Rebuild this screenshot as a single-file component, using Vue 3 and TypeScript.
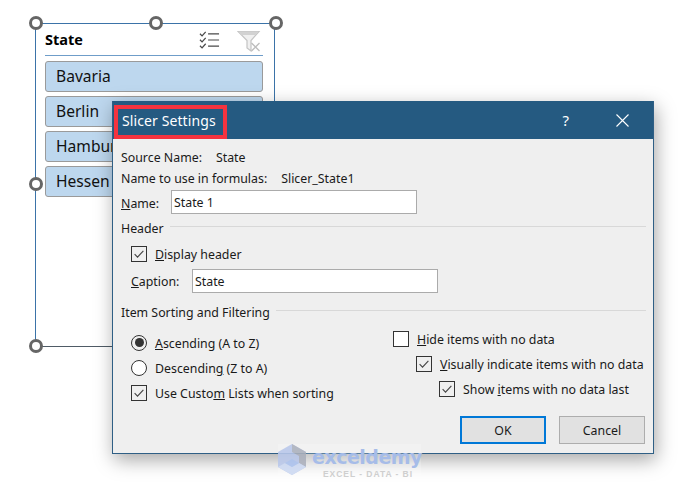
<script setup lang="ts">
const states: string[] = ['Bavaria', 'Berlin', 'Hamburg', 'Hessen']
</script>

<template>
  <div class="stage">
    <section class="slicer">
      <header class="slicer-head">
        <strong>State</strong>
        <svg class="ico-multi" width="21" height="20" viewBox="0 0 22 20" fill="none" stroke="#4a4a4a" stroke-width="1.3">
          <path d="M1 3.5l2.2 2.2L7 1.4M1 9.8L3.2 12 7 7.7M1 16l2.2 2.2L7 13.9" />
          <path d="M9.500 3.500H21M9.500 10H21M9.500 16.500H21" />
        </svg>
        <svg class="ico-filter" width="24" height="22" viewBox="0 0 24 22" fill="none">
          <path d="M1 1.500H22L14 10.500V21L10 18V10.500Z" fill="#f0f0f0" stroke="#c4c4c4" stroke-width="1.200" />
          <path d="M1.500 1.500H21.500L18.500 5H4.500Z" fill="#d2d2d2" />
          <path d="M14.500 13l8 8M22.500 13l-8 8" stroke="#bdbdbd" stroke-width="1.300" />
        </svg>
      </header>
      <ul class="items">
        <li v-for="s in states" :key="s">{{ s }}</li>
      </ul>
      <i class="handle h-tl"></i><i class="handle h-tc"></i><i class="handle h-tr"></i>
      <i class="handle h-ml"></i><i class="handle h-bl"></i>
    </section>

    <section class="dialog">
      <header class="titlebar">
        <span class="title">Slicer Settings</span>
        <span class="help">?</span>
        <svg class="close" width="13" height="13" viewBox="0 0 13 13" stroke="#fff" stroke-width="1.100"><path d="M.5.500l12 12M12.500.500l-12 12" /></svg>
      </header>
      <div class="body">
        <div class="row r-source"><span>Source Name:</span><span class="val1">State</span></div>
        <div class="row r-formula"><span>Name to use in formulas:</span><span class="val2">Slicer_State1</span></div>
        <div class="row r-name">
          <label class="lab-name"><u>N</u>ame:</label>
          <div class="input in-name">State 1</div>
        </div>
        <div class="group g-header"><span>Header</span><hr /></div>
        <div class="row r-display">
          <span class="check on"><svg viewBox="0 0 16 16"><path d="M3 8.200l3.300 3.300L13 4.500" /></svg></span>
          <span class="lab"><u>D</u>isplay header</span>
        </div>
        <div class="row r-caption">
          <label class="lab-caption"><u>C</u>aption:</label>
          <div class="input in-caption">State</div>
        </div>
        <div class="group g-sort"><span>Item Sorting and Filtering</span><hr /></div>
        <div class="columns">
          <div class="col-left">
            <div class="row opt"><span class="radio on"></span><span class="lab"><u>A</u>scending (A to Z)</span></div>
            <div class="row opt"><span class="radio"></span><span class="lab">Descendin<u>g</u> (Z to A)</span></div>
            <div class="row opt"><span class="check on"><svg viewBox="0 0 16 16"><path d="M3 8.200l3.300 3.300L13 4.500" /></svg></span><span class="lab">Use Custo<u>m</u> Lists when sorting</span></div>
          </div>
          <div class="col-right">
            <div class="row opt"><span class="check"></span><span class="lab"><u>H</u>ide items with no data</span></div>
            <div class="row opt indent1"><span class="check on"><svg viewBox="0 0 16 16"><path d="M3 8.200l3.300 3.300L13 4.500" /></svg></span><span class="lab"><u>V</u>isually indicate items with no data</span></div>
            <div class="row opt indent2"><span class="check on"><svg viewBox="0 0 16 16"><path d="M3 8.200l3.300 3.300L13 4.500" /></svg></span><span class="lab">Show <u>i</u>tems with no data last</span></div>
          </div>
        </div>
        <footer class="buttons">
          <button class="btn primary">OK</button>
          <button class="btn">Cancel</button>
        </footer>
      </div>
    </section>

    <i class="redbox"></i>

    <div class="watermark">
      <svg width="28" height="31" viewBox="0 0 28 31">
        <path d="M14 0L28 8V23L14 31L0 23V8Z" fill="#b7c6ea" />
        <path d="M14 0L28 8V23L21 19V12L14 8Z" fill="#a9aebb" />
        <path d="M0 23L7 19L14 23L21 19L28 23L14 31Z" fill="#cbd8f2" />
        <path d="M14 15L21 19L14 23L7 19Z" fill="#a8c0ee" />
      </svg>
      <div class="wm-text">
        <span class="wm-name">exceldemy</span>
        <span class="wm-sub">EXCEL - DATA - BI</span>
      </div>
    </div>
  </div>
</template>

<style>
html, body { margin: 0; background: #fff; }
</style>

<style scoped>
.stage {
  position: relative;
  width: 700px;
  height: 491px;
  overflow: hidden;
  background: #fff;
  font-family: "Noto Sans", "Open Sans", sans-serif;
  font-size: 12.35px;
  color: #1a1a1a;
}

/* slicer */
.slicer {
  position: absolute;
  left: 35px;
  top: 23px;
  width: 240px;
  height: 324px;
  box-sizing: border-box;
  border: 1px solid #3b73a8;
  border-bottom-color: #4f5b66;
  padding: 0 9px;
}
.slicer-head {
  display: flex;
  align-items: center;
  height: 31px;
  border-bottom: 1px solid #6f9dc9;
  width: 218px;
  font-family: "Open Sans", sans-serif;
  font-size: 14.5px;
  color: #000;
}
.slicer-head strong { flex: 1; }
.ico-multi { margin-right: 17px; }
.ico-filter { margin-right: 2px; margin-top: 2px; }
.items {
  list-style: none;
  margin: 5px 0 0;
  padding: 0;
  display: flex;
  flex-direction: column;
  gap: 4px;
  width: 218px;
}
.items li {
  height: 31px;
  box-sizing: border-box;
  line-height: 29px;
  padding-left: 10px;
  background: #bdd7ee;
  border: 1px solid #9a9a9a;
  border-radius: 3px;
  font-size: 15.6px;
  color: #111;
}
.handle {
  position: absolute;
  width: 14px;
  height: 14px;
  box-sizing: border-box;
  border-radius: 50%;
  border: 3px solid #666;
  background: #fff;
}
.h-tl { left: -7px; top: -8px; }
.h-tc { left: 113px; top: -8px; }
.h-tr { left: 233px; top: -8px; }
.h-ml { left: -7px; top: 153px; }
.h-bl { left: -7px; top: 315px; }

/* dialog */
.dialog {
  position: absolute;
  left: 112px;
  top: 101px;
  width: 542px;
  height: 353px;
  box-sizing: border-box;
  border: 1px solid #2f5f85;
  border-top: 0;
  background: #efefef;
  box-shadow: 2px 6px 18px rgba(0, 0, 0, 0.35);
}
.titlebar {
  height: 38px;
  background: #255a81;
  color: #fff;
  display: flex;
  align-items: center;
  padding-left: 9px;
}
.title { flex: 1; font-size: 14px; letter-spacing: 0.1px; }
.help { font-size: 15px; margin-right: 47px; }
.close { margin-right: 24px; }
.body { padding-left: 8px; }
.row { display: flex; align-items: center; }
.r-source { height: 18px; margin-top: 9px; }
.val1 { margin-left: 14px; }
.r-formula { height: 18px; margin-top: 3px; }
.val2 { margin-left: 14px; }
.r-name { height: 24px; margin-top: 3px; }
.lab-name { width: 50px; padding-top: 2px; }
.input {
  box-sizing: border-box;
  height: 24px;
  line-height: 22px;
  background: #fff;
  border: 1px solid #ababab;
  padding: 1px 0 0 2px;
}
.in-name { width: 246px; }
.group { display: flex; align-items: center; height: 18px; }
.group hr {
  flex: 1;
  height: 0;
  margin: -4px 7px 0 6px;
  border: 0;
  border-top: 1px solid #d8d8d8;
}
.g-header { margin-top: 5px; }
.r-display { height: 18px; margin-top: 8px; padding-left: 10px; }
.r-caption { height: 24px; margin-top: 6px; padding-left: 10px; }
.lab-caption { width: 61px; padding-top: 1px; }
.in-caption { width: 246px; }
.g-sort { margin-top: 10px; }
.check {
  flex: none;
  width: 16px;
  height: 16px;
  box-sizing: border-box;
  border: 1px solid #333;
  background: #fff;
}
.check.on { background: #efefef; }
.check svg { display: block; width: 14px; height: 14px; fill: none; stroke: #444; stroke-width: 1.300; }
.radio {
  flex: none;
  width: 16px;
  height: 16px;
  box-sizing: border-box;
  border: 1px solid #333;
  border-radius: 50%;
  background: #fff;
  position: relative;
}
.radio.on { background: #efefef; }
.radio.on::after {
  content: "";
  position: absolute;
  inset: 2.500px;
  border-radius: 50%;
  background: #333;
}
.lab { margin-left: 8px; }
.opt .lab { padding-top: 2px; }
.columns { display: flex; margin-top: 9px; height: 75px; }
.col-left { width: 262px; padding-left: 10px; }
.opt { height: 25px; }
.indent1 { padding-left: 23px; }
.indent2 { padding-left: 46px; }
.col-right { margin-top: -4px; }
.buttons {
  display: flex;
  justify-content: flex-end;
  gap: 13px;
  padding-right: 8px;
  margin-top: 11px;
}
.btn {
  width: 86px;
  height: 28px;
  box-sizing: border-box;
  background: #e1e1e1;
  border: 1px solid #adadad;
  font: inherit;
  color: #1a1a1a;
  padding: 0;
}
.btn.primary { border: 2px solid #0078d7; }

/* annotation */
.redbox {
  position: absolute;
  left: 114px;
  top: 105px;
  width: 113px;
  height: 34px;
  box-sizing: border-box;
  border: 4px solid #f5333f;
}

/* watermark */
.watermark {
  position: absolute;
  left: 278px;
  top: 444px;
  width: 143px;
  height: 32px;
  display: flex;
  gap: 6px;
  background: rgba(255, 255, 255, 0.2);
  pointer-events: none;
}
.watermark svg { flex: none; opacity: 0.85; }
.wm-text { display: flex; flex-direction: column; align-items: flex-start; min-width: 0; }
.wm-name {
  font-family: "DejaVu Sans", sans-serif;
  font-weight: 700;
  font-size: 19px;
  line-height: 26px;
  letter-spacing: -0.5px;
  color: #a6bce8;
}
.wm-sub {
  font-family: "Liberation Sans", sans-serif;
  font-weight: 700;
  font-size: 8.5px;
  line-height: 8px;
  letter-spacing: 0.95px;
  margin-left: 11px;
  white-space: nowrap;
  color: #cfcfcf;
}
</style>
